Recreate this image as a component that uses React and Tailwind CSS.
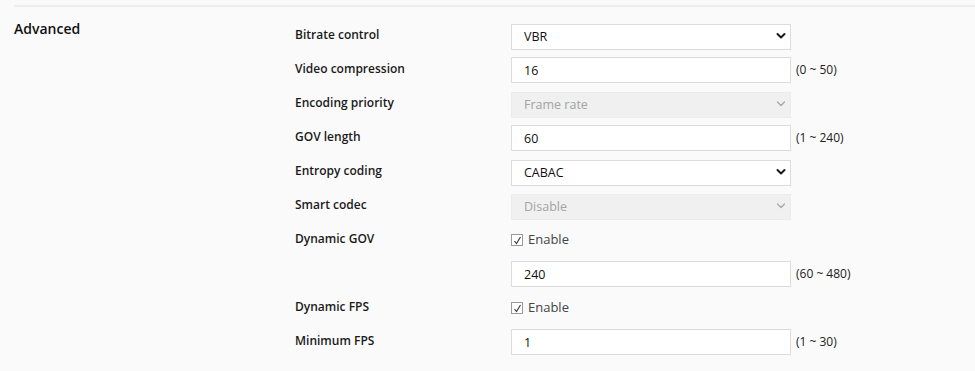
import React from "react";

const font = { fontFamily: '"Open Sans", "Noto Sans", sans-serif' };

function Chevron({ disabled }) {
  return (
    <svg
      className="pointer-events-none absolute right-[5px] top-1/2 -translate-y-1/2"
      width="10"
      height="7"
      viewBox="0 0 10 7"
    >
      <path
        d="M1.5 1.5 L5 5 L8.5 1.5"
        fill="none"
        stroke={disabled ? "#a8a8a8" : "#1a1a1a"}
        strokeWidth={disabled ? 1.3 : 2}
        strokeLinecap="round"
        strokeLinejoin="round"
      />
    </svg>
  );
}

function Select({ value, disabled }) {
  return (
    <div className="relative w-[280px] h-[26px]">
      <select
        disabled={disabled}
        defaultValue={value}
        className={`appearance-none w-full h-full pl-[12px] text-[12.5px] outline-none ${
          disabled
            ? "bg-[#f0f0f0] border border-[#ececec] text-[#a3a3a3]"
            : "bg-white border border-[#dcdcdc] text-[#111]"
        }`}
      >
        <option>{value}</option>
      </select>
      <Chevron disabled={disabled} />
    </div>
  );
}

function Input({ value, range }) {
  return (
    <div className="flex items-center gap-[5px]">
      <input
        defaultValue={value}
        className="w-[280px] h-[26px] bg-white border border-[#dcdcdc] pl-[12px] text-[12.5px] text-[#111] outline-none"
      />
      {range && <span className="text-[12px] text-[#222]">{range}</span>}
    </div>
  );
}

function Check() {
  return (
    <div className="flex items-center gap-[5px] h-[26px]">
      <span className="w-[12px] h-[12px] border border-[#9a9a9a] bg-white flex items-center justify-center">
        <svg width="9" height="9" viewBox="0 0 9 9">
          <path d="M1.5 5 L3.5 7.5 L7.5 1" fill="none" stroke="#333" strokeWidth="1.1" />
        </svg>
      </span>
      <span className="text-[13px] text-[#444]">Enable</span>
    </div>
  );
}

const rows = [
  { label: "Bitrate control", ctl: <Select value="VBR" /> },
  { label: "Video compression", ctl: <Input value="16" range="(0 ~ 50)" /> },
  { label: "Encoding priority", ctl: <Select value="Frame rate" disabled /> },
  { label: "GOV length", ctl: <Input value="60" range="(1 ~ 240)" /> },
  { label: "Entropy coding", ctl: <Select value="CABAC" /> },
  { label: "Smart codec", ctl: <Select value="Disable" disabled /> },
  { label: "Dynamic GOV", ctl: <Check /> },
  { label: "", ctl: <Input value="240" range="(60 ~ 480)" /> },
  { label: "Dynamic FPS", ctl: <Check /> },
  { label: "Minimum FPS", ctl: <Input value="1" range="(1 ~ 30)" /> },
];

export default function App() {
  return (
    <div className="w-[975px] h-[371px] bg-[#fafafa] pt-[5px] overflow-hidden" style={font}>
      <div className="ml-[14px] border-t-2 border-[#eeeeee]" />
      <div className="flex pt-[16px]">
        <div className="w-[295px] pl-[14px] -mt-[5px] text-[14px] font-semibold text-[#111]">
          Advanced
        </div>
        <div className="flex flex-col gap-[8px]">
          {rows.map((r, i) => (
            <div key={i} className="flex items-center">
              <div className="w-[216px] -mt-[2px] text-[12px] font-semibold text-[#1a1a1a]">{r.label}</div>
              {r.ctl}
            </div>
          ))}
        </div>
      </div>
    </div>
  );
}
